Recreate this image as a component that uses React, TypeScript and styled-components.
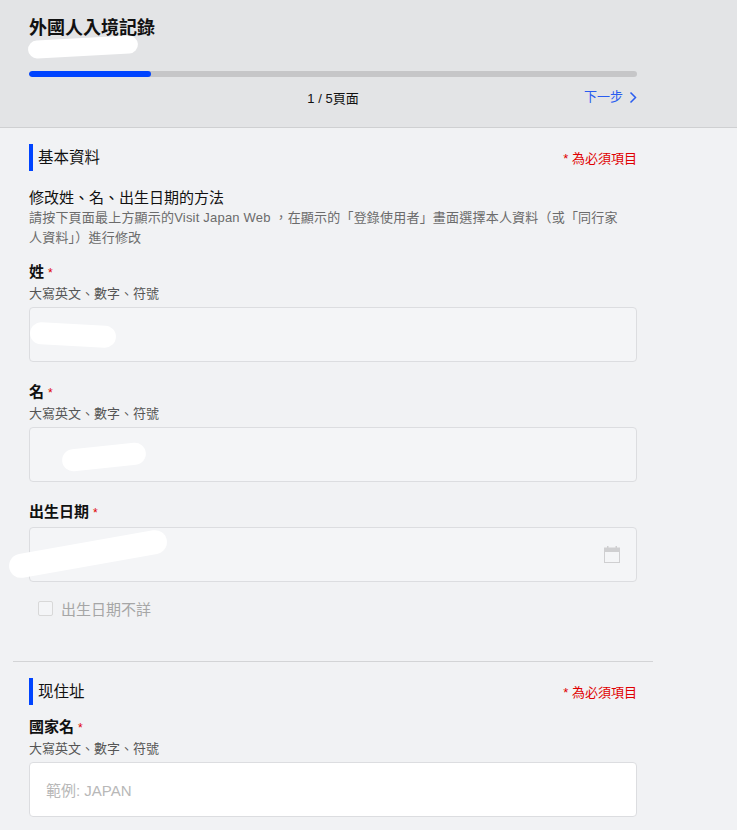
import React from "react";
import styled, { createGlobalStyle } from "styled-components";

const Global = createGlobalStyle`
  body { margin: 0; background: #f1f2f4; font-family: "Liberation Sans", "Noto Sans CJK TC", sans-serif; color: #111; }
`;

const Header = styled.header`
  background: #e3e4e6;
  border-bottom: 1px solid #cfd0d2;
  padding: 16px 100px 14px 29px;
  height: 97px;
  position: relative;
`;
const Title = styled.h1`
  margin: 0; font-size: 18px; font-weight: bold; line-height: 24px;
`;
const Blob = styled.div<{ w: number; h: number; rot?: number }>`
  position: absolute; background: #fff; border-radius: 12px;
  width: ${p => p.w}px; height: ${p => p.h}px; transform: rotate(${p => p.rot || 0}deg);
`;
const Track = styled.div`
  margin-top: 31px; height: 6px; border-radius: 3px; background: #c6c6c8; overflow: hidden;
`;
const Fill = styled.div`height: 100%; background: #0044ff; border-radius: 3px;`;
const PageRow = styled.div`
  position: relative; margin-top: 13px; display: flex; justify-content: center; font-size: 13px; line-height: 18px;
`;
const Next = styled.span`
  position: absolute; right: 0; top: -2px; color: #2a5cf0; font-size: 13px; display: flex; align-items: center; gap: 6px;
`;
const Main = styled.main`padding: 16px 100px 0 29px;`;
const SectionHead = styled.div`
  display: flex; justify-content: space-between; align-items: center; height: 27px;
`;
const SectionTitle = styled.div`
  border-left: 4px solid #0044ff; padding-left: 5px; font-size: 15.5px; line-height: 27px;
`;
const Required = styled.span`color: #e00000; font-size: 13px;`;
const Info = styled.div`margin-top: 17px; font-size: 15px; line-height: 20px;`;
const Sub = styled.div`font-size: 13px; color: #6b6b6b; line-height: 20px; padding-right: 14px; letter-spacing: 0.2px;`;
const Field = styled.div<{ top: number }>`margin-top: ${p => p.top}px;`;
const Label = styled.div`font-size: 15px; font-weight: bold; line-height: 20px;`;
const Star = styled.span`color: #e00000; font-size: 12px; margin-left: 4px; font-weight: normal;`;
const Hint = styled.div`font-size: 13px; color: #555; line-height: 18px; margin-top: 2px;`;
const Input = styled.div<{ white?: boolean }>`
  position: relative; margin-top: 4px; height: 53px; border: 1px solid #dcdde0; border-radius: 4px;
  background: ${p => (p.white ? "#fff" : "#f4f5f7")}; display: flex; align-items: center; padding: 0 16px;
  color: #b8b8b8; font-size: 15px; justify-content: space-between;
`;
const Check = styled.label`
  display: flex; align-items: center; gap: 8px; margin: 16px 0 0 9px; color: #a6a6a6; font-size: 15px;
`;
const Box = styled.span`width: 13px; height: 13px; border: 1px solid #d8d8d8; border-radius: 2px; background: #f4f5f7;`;
const Divider = styled.hr`
  border: none; border-top: 1px solid #d3d4d6; margin: 42px -16px 16px -16px;
`;

export default function App() {
  return (
    <>
      <Global />
      <Header>
        <Title>外國人入境記錄</Title>
        <Blob w={110} h={18} rot={-3} style={{ left: 28, top: 38 }} />
        <Track><Fill style={{ width: "20%" }} /></Track>
        <PageRow>
          1 / 5頁面
          <Next>下一步
            <svg width="8" height="13" viewBox="0 0 8 13"><path d="M1.5 1.5 6.5 6.5 1.5 11.5" fill="none" stroke="#2a5cf0" strokeWidth="1.5" /></svg>
          </Next>
        </PageRow>
      </Header>
      <Main>
        <SectionHead><SectionTitle>基本資料</SectionTitle><Required>* 為必須項目</Required></SectionHead>
        <Info>修改姓、名、出生日期的方法</Info>
        <Sub>請按下頁面最上方顯示的Visit Japan Web ，在顯示的「登錄使用者」畫面選擇本人資料（或「同行家人資料」）進行修改</Sub>
        <Field top={14}>
          <Label>姓<Star>*</Star></Label>
          <Hint>大寫英文、數字、符號</Hint>
          <Input><Blob w={86} h={22} rot={3} style={{ left: 0, top: 16 }} /></Input>
        </Field>
        <Field top={20}>
          <Label>名<Star>*</Star></Label>
          <Hint>大寫英文、數字、符號</Hint>
          <Input><Blob w={84} h={22} rot={-6} style={{ left: 32, top: 18 }} /></Input>
        </Field>
        <Field top={20}>
          <Label>出生日期<Star>*</Star></Label>
          <Input>
            <Blob w={160} h={24} rot={-10} style={{ left: -22, top: 14 }} />
            <span />
            <svg width="16" height="17" viewBox="0 0 16 17"><rect x="0.5" y="2" width="15" height="14.5" fill="none" stroke="#cfcfd1" /><rect x="0.5" y="2" width="15" height="4" fill="#cfcfd1" /><rect x="3" y="0" width="1.5" height="3" fill="#cfcfd1" /><rect x="11.5" y="0" width="1.5" height="3" fill="#cfcfd1" /></svg>
          </Input>
          <Check><Box />出生日期不詳</Check>
        </Field>
        <Divider />
        <SectionHead><SectionTitle>现住址</SectionTitle><Required>* 為必須項目</Required></SectionHead>
        <Field top={12}>
          <Label>國家名<Star>*</Star></Label>
          <Hint>大寫英文、數字、符號</Hint>
          <Input white>範例: JAPAN</Input>
        </Field>
      </Main>
    </>
  );
}
